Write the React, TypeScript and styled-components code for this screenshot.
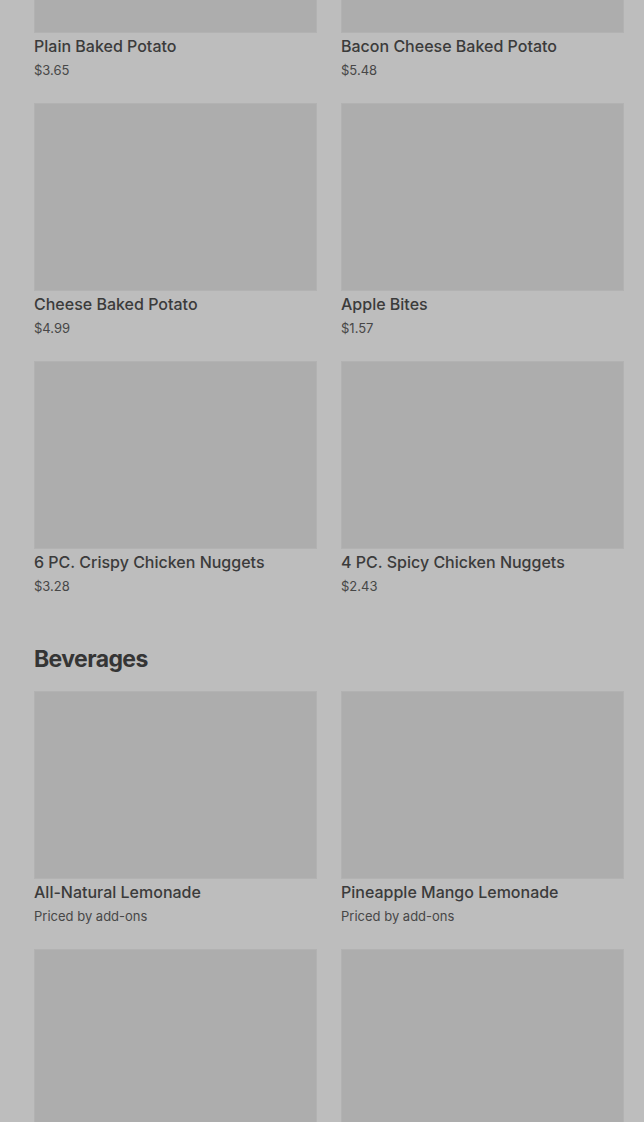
import styled, { createGlobalStyle } from "styled-components"

const GlobalStyle = createGlobalStyle`
    html, body {
        margin: 0;
        padding: 0;
        background: #bdbdbd;
        overflow: hidden;
    }
    body {
        font-family: Inter, "Noto Sans", sans-serif;
    }
`

interface Item {
    name: string
    price?: string
}

const sides: Item[] = [
    { name: "Plain Baked Potato", price: "$3.65" },
    { name: "Bacon Cheese Baked Potato", price: "$5.48" },
    { name: "Cheese Baked Potato", price: "$4.99" },
    { name: "Apple Bites", price: "$1.57" },
    { name: "6 PC. Crispy Chicken Nuggets", price: "$3.28" },
    { name: "4 PC. Spicy Chicken Nuggets", price: "$2.43" }
]

const beverages: Item[] = [
    { name: "All-Natural Lemonade" },
    { name: "Pineapple Mango Lemonade" },
    { name: "Strawberry Lemonade" },
    { name: "Frosty-ccino" }
]

export default function App() {
    return (
        <>
            <GlobalStyle />
            <Page>
                <Section>
                    <Grid>
                        {sides.map((item) => (
                            <Card key={item.name} item={item} />
                        ))}
                    </Grid>
                </Section>
                <Section>
                    <Heading>Beverages</Heading>
                    <Grid>
                        {beverages.map((item) => (
                            <Card key={item.name} item={item} />
                        ))}
                    </Grid>
                </Section>
            </Page>
        </>
    )
}

function Card({ item }: { item: Item }) {
    return (
        <CardWrap>
            <Thumb />
            <Name>{item.name}</Name>
            <Price>{item.price ?? "Priced by add-ons"}</Price>
        </CardWrap>
    )
}

const Page = styled.div`
    margin-top: -155px;
    padding: 0 20px 0 34px;
    display: flex;
    flex-direction: column;
    gap: 48px;
`

const Section = styled.section`
    display: flex;
    flex-direction: column;
    gap: 16px;
`

const Heading = styled.h2`
    margin: 0;
    font-family: Inter, sans-serif;
    font-size: 23px;
    line-height: 32px;
    font-weight: 700;
    letter-spacing: -0.6px;
    color: #353535;
`

const Grid = styled.div`
    display: grid;
    grid-template-columns: repeat(2, minmax(0, 1fr));
    column-gap: 24px;
    row-gap: 24px;
`

const CardWrap = styled.div`
    display: flex;
    flex-direction: column;
`

const Thumb = styled.div`
    height: 188px;
    background: #adadad;
    box-shadow: inset 0 0 0 1px #b2b2b2;
`

const Name = styled.div`
    margin-top: 3px;
    font-size: 16px;
    line-height: 20px;
    font-weight: 500;
    color: #3b3b3b;
`

const Price = styled.div`
    margin-top: 5px;
    font-size: 13px;
    line-height: 18px;
    color: #474747;
`
